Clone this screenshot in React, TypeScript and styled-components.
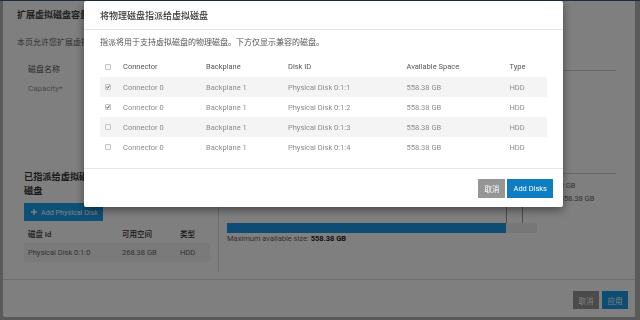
import styled, { createGlobalStyle } from "styled-components";

/* ── Global ── */

const GlobalStyle = createGlobalStyle`
  html, body { margin: 0; padding: 0; }
  body {
    width: 640px;
    height: 320px;
    overflow: hidden;
    background: #b4b4b4;
    font-family: Roboto, "Noto Sans CJK SC", sans-serif;
  }
  * { box-sizing: border-box; }
`;

/* ── Background dialog (扩展虚拟磁盘容量) ── */

const Page = styled.div`
  height: 320px;
  display: flex;
  border-top: 1px solid #3a5878;
  padding: 0 5px 3px 3px;
`;

const Window = styled.div`
  flex: 1;
  display: flex;
  flex-direction: column;
  background: #fff;
  border-radius: 0 0 2px 2px;
`;

const WindowHeader = styled.div`
  height: 27px;
  display: flex;
  align-items: center;
  padding-left: 14px;
  font-size: 9px;
  font-weight: 700;
  color: #444;
`;

const WindowContent = styled.div`
  flex: 1;
  display: flex;
  flex-direction: column;
  padding: 0 19px 0 14px;
`;

const Intro = styled.div`
  margin-top: 9px;
  font-size: 8px;
  line-height: 12px;
  color: #666;
  white-space: nowrap;
`;

const ContentGrid = styled.div`
  flex: 1;
  display: grid;
  grid-template-columns: 1fr 75px;
  column-gap: 4px;
`;

const Main = styled.div`
  display: flex;
  flex-direction: column;
`;

const Form = styled.div`
  margin-top: 9px;
  padding-left: 11px;
`;

const FormRow = styled.div<{ $muted?: boolean }>`
  height: 20px;
  display: flex;
  align-items: center;
  font-size: 8px;
  color: ${({ $muted }) => ($muted ? "#999" : "#555")};
`;

const Lower = styled.div`
  margin: 62px 0 0 7px;
  display: grid;
  grid-template-columns: 195px 1fr;
`;

const AssignedCol = styled.div`
  padding: 10px 8px 10px 0;
  border-right: 1px solid #d8d8d8;
`;

const SectionTitle = styled.div`
  max-width: 11.5em;
  font-size: 9.2px;
  line-height: 14px;
  font-weight: 700;
  color: #333;
`;

const AddDiskBtn = styled.button`
  margin-top: 5px;
  height: 18px;
  display: inline-flex;
  align-items: center;
  gap: 4px;
  padding: 0 5px 0 7px;
  border: none;
  background: #1aa0f0;
  color: #fff;
  font-family: inherit;
  font-size: 7.2px;
`;

const MiniTable = styled.div`
  margin-top: 2px;
`;

const MiniRow = styled.div<{ $head?: boolean }>`
  display: grid;
  grid-template-columns: 94px 58px 1fr;
  align-items: center;
  height: ${({ $head }) => ($head ? "20px" : "19px")};
  background: ${({ $head }) => ($head ? "transparent" : "#f4f4f4")};
  font-size: 7.5px;
  color: ${({ $head }) => ($head ? "#333" : "#666")};
  font-weight: ${({ $head }) => ($head ? 500 : 400)};

  & > span { padding-left: 4px; white-space: nowrap; }
`;

const CapacityCol = styled.div`
  padding: 63px 0 0 8px;
`;

const BarTrack = styled.div`
  position: relative;
  height: 10px;
  background: #eeeeee;
`;

const BarFill = styled.div`
  height: 100%;
  background: #2196e8;
`;

const BarMarker = styled.div`
  position: absolute;
  bottom: 100%;
  width: 1px;
  height: 50px;
  background: #9a9a9a;
`;

const BarCaption = styled.div`
  margin-top: 1px;
  font-size: 7.5px;
  line-height: 10px;
  color: #666;

  b { color: #222; font-weight: 700; }
`;

const Side = styled.div`
  padding-top: 21px;
`;

const SideCard = styled.div`
  height: 104px;
  border-top: 1px solid #d0d0d0;
  border-bottom: 1px solid #d0d0d0;
`;

const SideList = styled.div`
  margin-top: 5px;
  font-size: 7.5px;
  line-height: 13px;
  color: #666;
  white-space: nowrap;
`;

const WindowFooter = styled.div`
  display: flex;
  justify-content: flex-end;
  gap: 3px;
  padding: 11px 7px 8px;
  border-top: 1px solid #dcdcdc;
`;

const Btn = styled.button<{ $primary?: boolean; $h?: number }>`
  height: ${({ $h }) => $h ?? 18}px;
  padding: 0 ${({ $h }) => ($h ? 6 : 5.5)}px;
  border: none;
  border-radius: 0;
  font-family: inherit;
  font-size: 7.5px;
  color: #fff;
  background: ${({ $primary }) => ($primary ? "#1a9ae6" : "#969696")};
`;

/* ── Overlay + modal (将物理磁盘指派给虚拟磁盘) ── */

const Overlay = styled.div`
  position: fixed;
  inset: 0;
  background: rgba(0, 0, 0, 0.5);
`;

const Modal = styled.div`
  position: fixed;
  top: 1px;
  left: 84px;
  width: 479px;
  background: #fff;
  border-radius: 2px;
  box-shadow: 0 3px 10px rgba(0, 0, 0, 0.45);
`;

const ModalHeader = styled.div`
  height: 29px;
  display: flex;
  align-items: center;
  padding-left: 16px;
  border-bottom: 1px solid #e5e5e5;
  font-size: 9px;
  font-weight: 500;
  color: #333;
`;

const ModalBody = styled.div`
  padding: 7px 16px 11px;
`;

const Desc = styled.div`
  margin-bottom: 7px;
  font-size: 8px;
  line-height: 12px;
  color: #555;
`;

const DiskRow = styled.div<{ $head?: boolean; $striped?: boolean }>`
  display: grid;
  grid-template-columns: 23px 83px 82px 118.5px 103px 1fr;
  align-items: center;
  height: ${({ $head }) => ($head ? "21px" : "20px")};
  background: ${({ $striped }) => ($striped ? "#f4f4f4" : "transparent")};
  font-size: 7.5px;
  color: ${({ $head }) => ($head ? "#555" : "#8c8c8c")};
  white-space: nowrap;
`;

const CheckCell = styled.span`
  display: flex;
  padding-left: 5px;
`;

const CheckBox = styled.span`
  width: 6px;
  height: 6px;
  display: flex;
  align-items: center;
  justify-content: center;
  border: 1px solid #c4c4c4;
  border-radius: 1px;
  background: #f6f6f6;
`;

const ModalFooter = styled.div`
  display: flex;
  justify-content: flex-end;
  gap: 2px;
  padding: 10px 10px 9px;
  border-top: 1px solid #e5e5e5;
`;

/* ── Data ── */

const disks = [
	{ id: "Physical Disk 0:1:1", checked: true },
	{ id: "Physical Disk 0:1:2", checked: true },
	{ id: "Physical Disk 0:1:3", checked: false },
	{ id: "Physical Disk 0:1:4", checked: false },
];

const usedPct = 89.9;

function Check({ checked }: { checked: boolean }) {
	return (
		<CheckCell>
			<CheckBox>
				{checked && (
					<svg width="6" height="6" viewBox="0 0 6 6">
						<path d="M0.6 3.1 L2.3 4.8 L5.4 0.9" fill="none" stroke="#333" strokeWidth="1.3" />
					</svg>
				)}
			</CheckBox>
		</CheckCell>
	);
}

export default function App() {
	return (
		<>
			<GlobalStyle />
			<Page>
				<Window>
					<WindowHeader>扩展虚拟磁盘容量</WindowHeader>
					<WindowContent>
						<Intro>本页允许您扩展虚拟磁盘的容量。请选择要添加的物理磁盘并指定新的容量。</Intro>
						<ContentGrid>
							<Main>
								<Form>
									<FormRow>磁盘名称</FormRow>
									<FormRow $muted>Capacity*</FormRow>
								</Form>
								<Lower>
									<AssignedCol>
										<SectionTitle>已指派给虚拟磁盘的物理磁盘</SectionTitle>
										<AddDiskBtn>
											<svg width="6" height="6" viewBox="0 0 6 6">
												<path d="M3 0 V6 M0 3 H6" stroke="#fff" strokeWidth="1.4" />
											</svg>
											Add Physical Disk
										</AddDiskBtn>
										<MiniTable>
											<MiniRow $head>
												<span>磁盘 Id</span>
												<span>可用空间</span>
												<span>类型</span>
											</MiniRow>
											<MiniRow>
												<span>Physical Disk 0:1:0</span>
												<span>268.38 GB</span>
												<span>HDD</span>
											</MiniRow>
										</MiniTable>
									</AssignedCol>
									<CapacityCol>
										<BarTrack>
											<BarFill style={{ width: `${usedPct}%` }} />
											<BarMarker style={{ left: `${usedPct}%` }} />
											<BarMarker style={{ left: "95.1%" }} />
										</BarTrack>
										<BarCaption>
											Maximum available size: <b>558.38 GB</b>
										</BarCaption>
									</CapacityCol>
								</Lower>
							</Main>
							<Side>
								<SideCard />
								<SideList>
									<div>容量: 0 GB</div>
									<div>剩余: 558.38 GB</div>
								</SideList>
							</Side>
						</ContentGrid>
					</WindowContent>
					<WindowFooter>
						<Btn>取消</Btn>
						<Btn $primary>应用</Btn>
					</WindowFooter>
				</Window>
			</Page>

			<Overlay />

			<Modal>
				<ModalHeader>将物理磁盘指派给虚拟磁盘</ModalHeader>
				<ModalBody>
					<Desc>指派将用于支持虚拟磁盘的物理磁盘。下方仅显示兼容的磁盘。</Desc>
					<DiskRow $head>
						<Check checked={false} />
						<span>Connector</span>
						<span>Backplane</span>
						<span>Disk ID</span>
						<span>Available Space</span>
						<span>Type</span>
					</DiskRow>
					{disks.map((d, i) => (
						<DiskRow key={d.id} $striped={i % 2 === 0}>
							<Check checked={d.checked} />
							<span>Connector 0</span>
							<span>Backplane 1</span>
							<span>{d.id}</span>
							<span>558.38 GB</span>
							<span>HDD</span>
						</DiskRow>
					))}
				</ModalBody>
				<ModalFooter>
					<Btn $h={19}>取消</Btn>
					<Btn $h={19} style={{ background: "#0f7dc2" }}>Add Disks</Btn>
				</ModalFooter>
			</Modal>
		</>
	);
}
